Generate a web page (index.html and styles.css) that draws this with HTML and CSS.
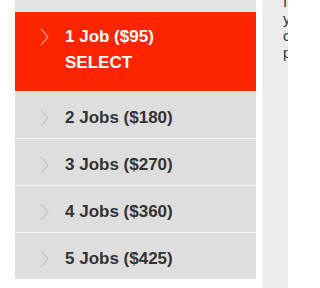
FILE: index.html
```html
<!DOCTYPE html>
<html>
<head>
<meta charset="utf-8">
<link rel="stylesheet" href="styles.css">
</head>
<body>
<div class="page">
  <div class="panel">
    <div class="prev"></div>
    <div class="item active">
      <svg class="chev" viewBox="0 0 9 18" width="9" height="18"><polyline points="1,1 8,9 1,17" fill="none" stroke="currentColor" stroke-width="1.4"/></svg>
      <div class="label">1 Job ($95)<br>SELECT</div>
    </div>
    <div class="item">
      <svg class="chev" viewBox="0 0 9 18" width="9" height="18"><polyline points="1,1 8,9 1,17" fill="none" stroke="currentColor" stroke-width="1.4"/></svg>
      <div class="label">2 Jobs ($180)</div>
    </div>
    <div class="item">
      <svg class="chev" viewBox="0 0 9 18" width="9" height="18"><polyline points="1,1 8,9 1,17" fill="none" stroke="currentColor" stroke-width="1.4"/></svg>
      <div class="label">3 Jobs ($270)</div>
    </div>
    <div class="item">
      <svg class="chev" viewBox="0 0 9 18" width="9" height="18"><polyline points="1,1 8,9 1,17" fill="none" stroke="currentColor" stroke-width="1.4"/></svg>
      <div class="label">4 Jobs ($360)</div>
    </div>
    <div class="item">
      <svg class="chev" viewBox="0 0 9 18" width="9" height="18"><polyline points="1,1 8,9 1,17" fill="none" stroke="currentColor" stroke-width="1.4"/></svg>
      <div class="label">5 Jobs ($425)</div>
    </div>
  </div>
  <div class="side">
    <p class="info"><span>If you need more</span><span>your team can buy</span><span>credits in bulk at a</span><span>price per job.</span></p>
  </div>
</div>
</body>
</html>
```
FILE: styles.css
```css
html, body {
  margin: 0;
  padding: 0;
  background: #ffffff;
  overflow: hidden;
  width: 288px;
  height: 288px;
  font-family: "Liberation Sans", Arial, sans-serif;
}
.page {
  display: flex;
  gap: 6px;
  width: 288px;
  height: 288px;
  padding-left: 15px;
  box-sizing: border-box;
  overflow: hidden;
}
.panel {
  flex: 0 0 241px;
  display: flex;
  flex-direction: column;
  align-self: flex-start;
}
.prev {
  height: 12px;
  background: #e4e4e4;
}
.item {
  display: flex;
  align-items: flex-start;
  gap: 16px;
  padding: 13px 0 6px 25px;
  height: 27px;
  background: #dedede;
  border-top: 1px solid #f4f4f4;
  color: #333333;
}
.item .chev {
  flex: 0 0 9px;
  margin-top: 4px;
  color: #c9c9c9;
}
.label {
  font-size: 17px;
  font-weight: bold;
  line-height: 26px;
}
.item.active {
  background: #ff2400;
  color: #ffffff;
  border-top: none;
  height: 52px;
  padding-top: 12px;
  padding-bottom: 15px;
}
.item.active .chev {
  color: #ff8a7c;
}
.side {
  flex: 1 1 auto;
  min-width: 0;
  overflow: hidden;
  background: #ebebeb;
  border-left: 1px solid #f3f3f3;
  padding-left: 20px;
}
.info {
  margin: -7px 0 0 0;
  font-size: 15px;
  line-height: 17px;
  color: #3a3a3a;
  white-space: nowrap;
}
.info span {
  display: block;
}
```
